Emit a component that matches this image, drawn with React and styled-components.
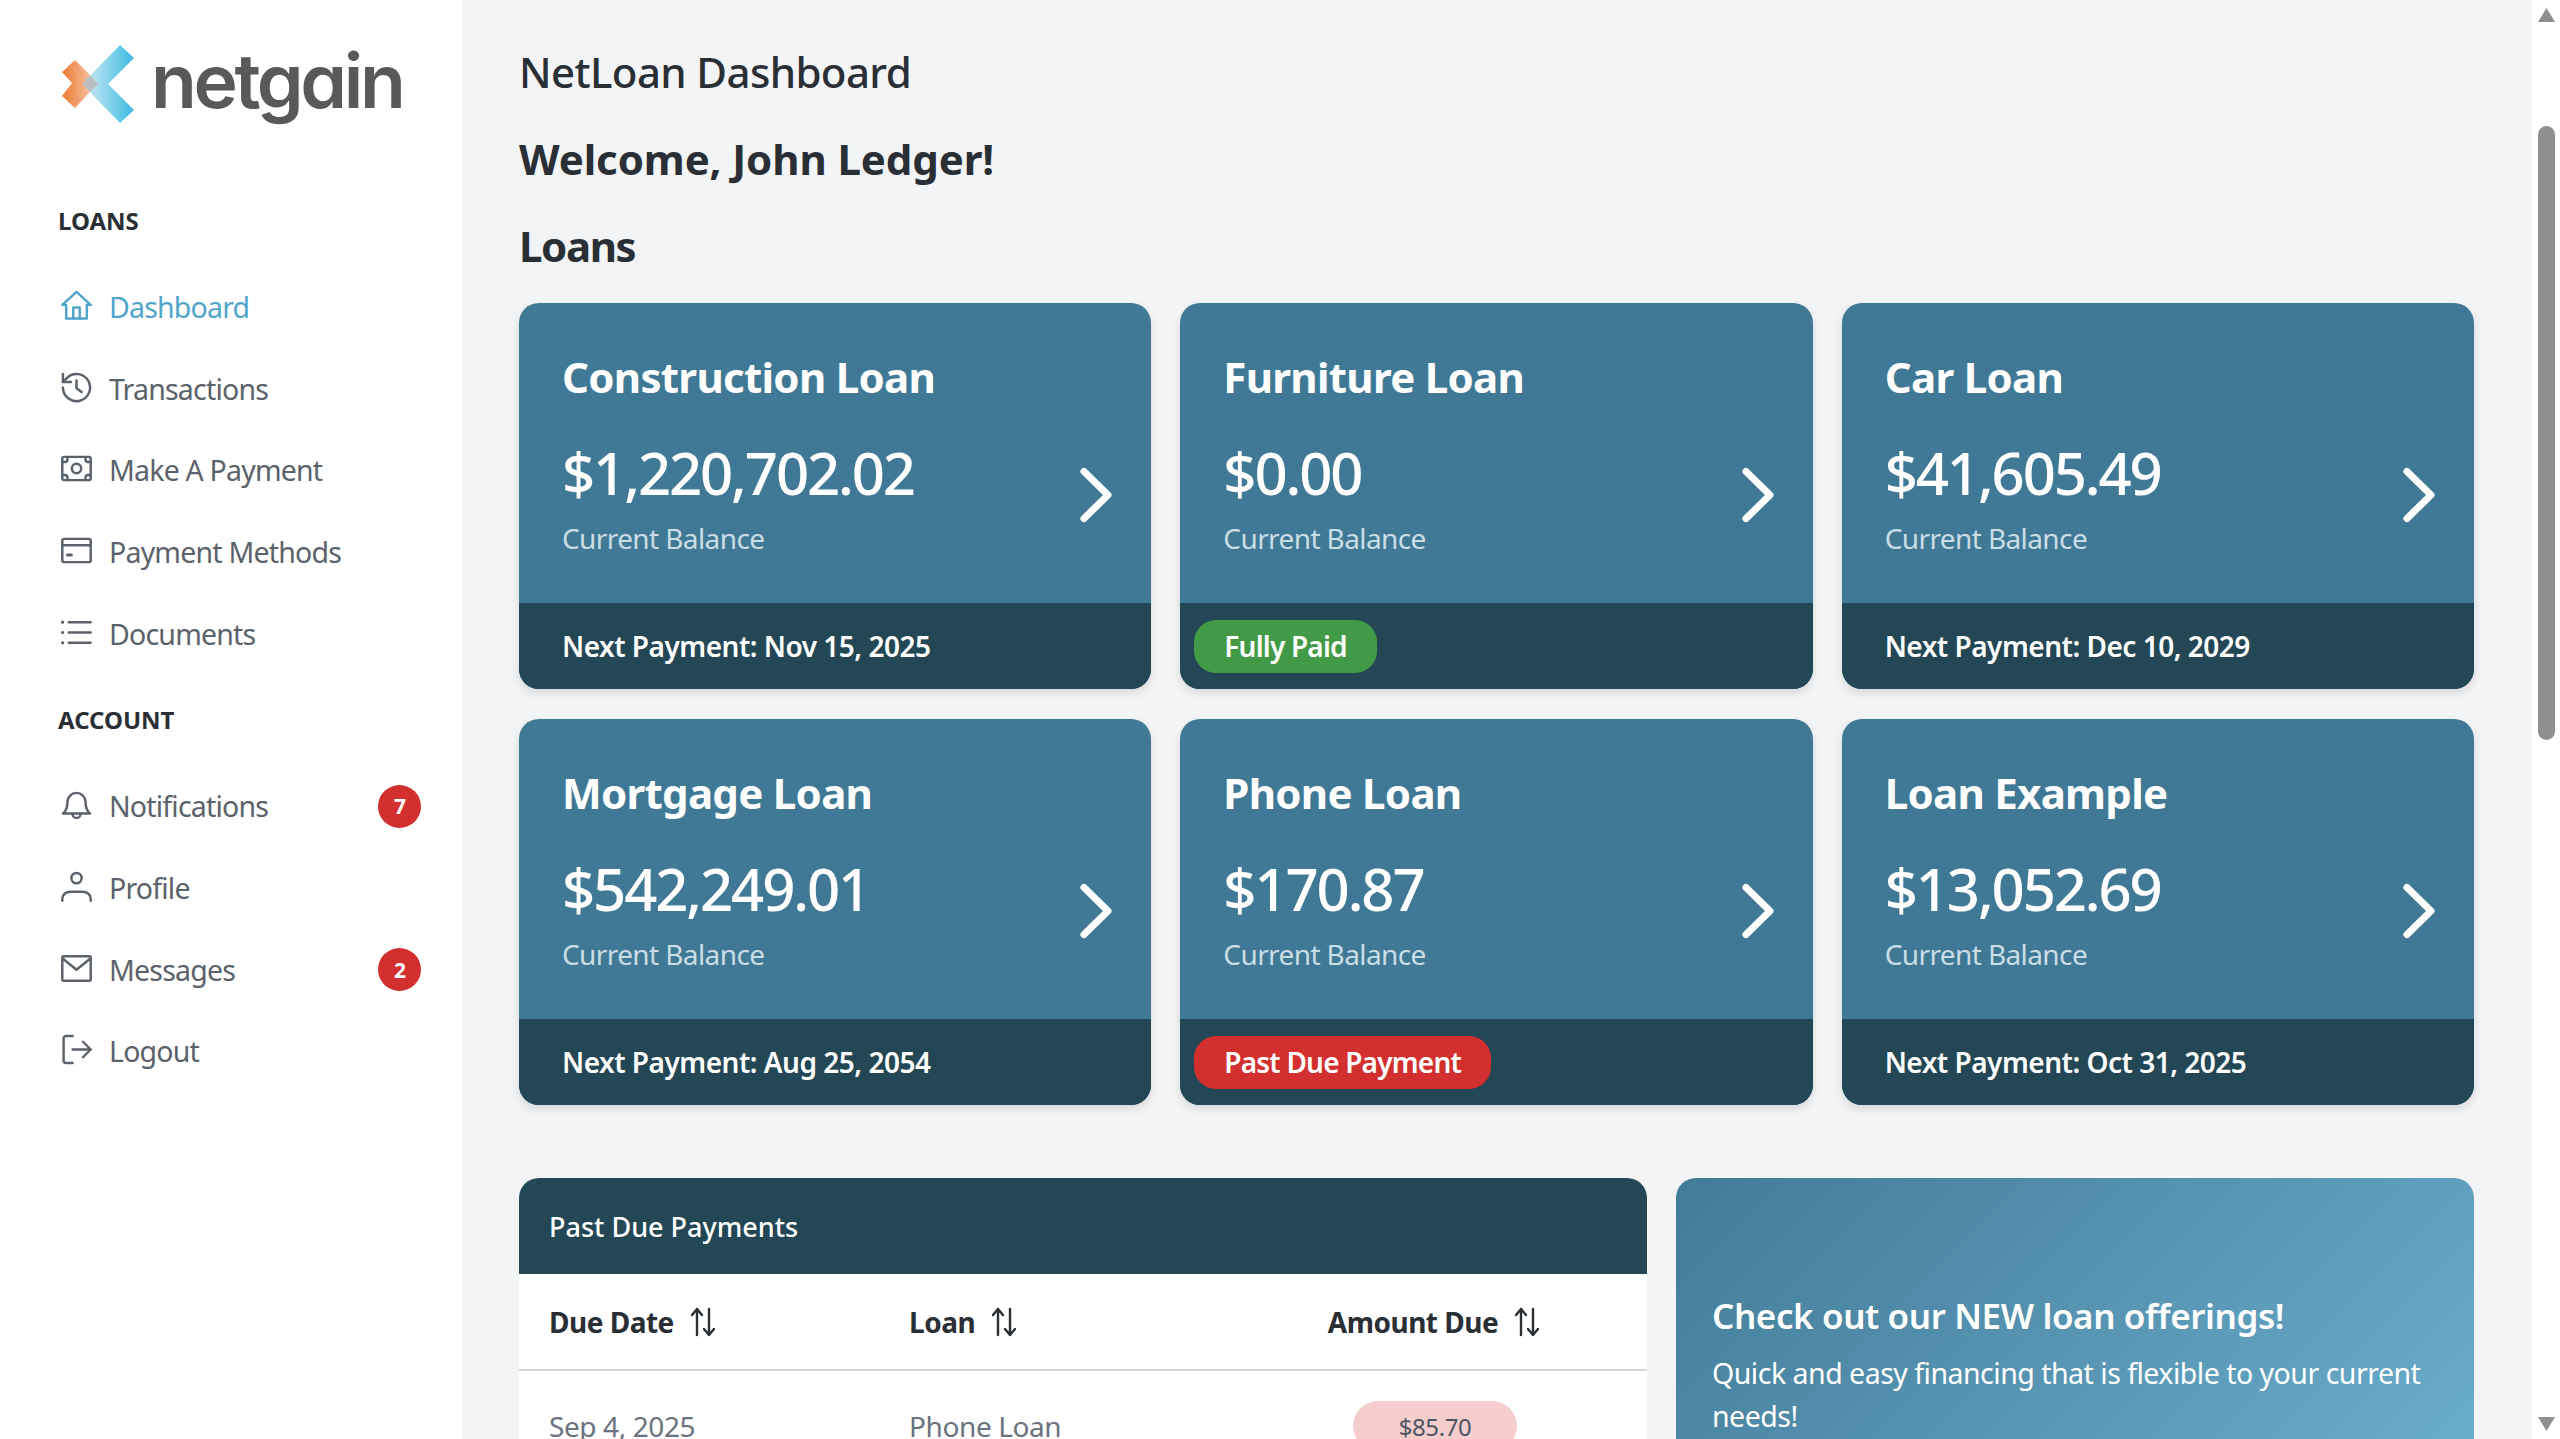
import styled, { createGlobalStyle } from 'styled-components';

const GlobalStyle = createGlobalStyle`
  html, body {
    margin: 0;
    height: 100%;
    overflow: hidden;
    background: #f3f4f6;
    font-family: 'Noto Sans', 'Open Sans', sans-serif;
  }
  * {
    box-sizing: border-box;
  }
`;

const Page = styled.div`
  display: grid;
  grid-template-columns: 462px 1fr 28px;
  height: 100vh;
  overflow: hidden;
`;

/* sidebar */
const Sidebar = styled.aside`
  background: #fff;
  padding: 45px 41px 0 58px;
`;

const LogoRow = styled.div`
  display: flex;
  align-items: flex-start;
  gap: 17px;
  height: 78px;
  padding-left: 4px;
`;

const LogoWord = styled.span`
  font-family: Inter, sans-serif;
  font-feature-settings: 'cv11' 1;
  font-size: 75px;
  font-weight: 600;
  line-height: 72px;
  letter-spacing: -3.4px;
  color: #58595b;
`;

const NavLabel = styled.h4`
  margin: ${(p) => p.$top}px 0 0;
  height: 40px;
  font-size: 24px;
  font-weight: 700;
  line-height: 40px;
  color: #2a2e35;
`;

const NavList = styled.nav`
  display: flex;
  flex-direction: column;
  margin-top: 25px;
`;

const NavItem = styled.a`
  display: flex;
  align-items: center;
  gap: 18px;
  height: 81.7px;
  padding-left: 4px;
  font-size: 28.5px;
  letter-spacing: -0.8px;
  color: ${(p) => (p.$active ? '#52a5ca' : '#5b626a')};
`;

const NavText = styled.span`
  flex: 1;
`;

const Badge = styled.span`
  display: flex;
  align-items: center;
  justify-content: center;
  width: 43px;
  height: 43px;
  border-radius: 50%;
  background: #d32f2f;
  color: #fff;
  font-size: 21px;
  font-weight: 700;
`;

const IconSvg = styled.svg`
  flex: none;
  width: 31px;
  height: 31px;
  margin: -3px -1px 0;
  fill: none;
  stroke: currentColor;
  stroke-width: 1.9;
  stroke-linecap: round;
  stroke-linejoin: round;
`;

/* main column */
const Main = styled.main`
  padding: 28px 58px 0 57px;
  overflow: hidden;
  background: #f3f4f6;
`;

const PageTitle = styled.h1`
  margin: 0;
  font-size: 42px;
  font-weight: 500;
  line-height: 87px;
  letter-spacing: -0.6px;
  color: #2a2e35;
`;

const SectionTitle = styled.h2`
  margin: 0;
  font-size: 42px;
  font-weight: 700;
  line-height: 87px;
  letter-spacing: ${(p) => p.$spacing}px;
  color: #2a2e35;
`;

const CardGrid = styled.div`
  display: grid;
  grid-template-columns: repeat(3, 1fr);
  gap: 30px 29px;
  margin-top: 14px;
`;

const Card = styled.article`
  display: flex;
  flex-direction: column;
  height: 386px;
  border-radius: 20px;
  overflow: hidden;
  background: #407995;
  color: #fff;
  box-shadow: 0 4px 10px rgba(0, 0, 0, 0.12);
`;

const CardBody = styled.div`
  flex: 1;
  display: flex;
  justify-content: space-between;
  padding: 43px 36px 0 43px;
`;

const CardTitle = styled.h3`
  margin: 0;
  font-size: 42px;
  font-weight: 700;
  line-height: 62px;
  letter-spacing: -0.7px;
`;

const Amount = styled.div`
  margin-top: 32px;
  font-size: 58px;
  font-weight: 500;
  line-height: 66px;
  letter-spacing: -2.1px;
`;

const BalanceLabel = styled.div`
  margin-top: 13px;
  font-size: 28px;
  line-height: 38px;
  letter-spacing: -0.6px;
  color: #c9dde7;
`;

const Chevron = styled.svg`
  flex: none;
  align-self: flex-end;
  width: 38px;
  height: 60px;
  margin-bottom: 78px;
  fill: none;
  stroke: #fff;
  stroke-width: 7;
  stroke-linecap: round;
  stroke-linejoin: round;
`;

const CardFooter = styled.div`
  display: flex;
  align-items: center;
  height: 86px;
  padding-left: ${(p) => (p.$pill ? 14 : 43)}px;
  background: #244755;
  font-size: 28px;
  font-weight: 600;
  letter-spacing: -0.5px;
`;

const StatusPill = styled.span`
  display: flex;
  align-items: center;
  height: 53px;
  padding: 0 30px;
  border-radius: 22px;
  background: ${(p) => p.$color};
  font-weight: 600;
  letter-spacing: -0.8px;
`;

const BottomRow = styled.div`
  display: grid;
  grid-template-columns: 1128px 1fr;
  gap: 29px;
  margin-top: 73px;
`;

const TablePanel = styled.section`
  border-radius: 20px 20px 0 0;
  overflow: hidden;
  background: #fff;
  height: 340px;
`;

const TableTitle = styled.div`
  display: flex;
  align-items: center;
  height: 96px;
  padding-left: 30px;
  background: #244755;
  color: #fff;
  font-size: 27px;
  font-weight: 500;
`;

const TableRow = styled.div`
  display: grid;
  grid-template-columns: 360px 344px 1fr;
  align-items: center;
  height: ${(p) => p.$height}px;
  border-bottom: ${(p) => (p.$head ? '2px solid #d5d6d8' : 'none')};
`;

const HeadCell = styled.div`
  display: flex;
  align-items: center;
  justify-content: ${(p) => (p.$center ? 'center' : 'flex-start')};
  gap: 14px;
  padding-left: ${(p) => (p.$center ? 0 : 30)}px;
  font-size: 28px;
  font-weight: 700;
  letter-spacing: -0.5px;
  color: #2a2e35;
`;

const BodyCell = styled.div`
  display: flex;
  justify-content: ${(p) => (p.$center ? 'center' : 'flex-start')};
  padding-left: ${(p) => (p.$center ? 0 : 30)}px;
  font-size: 28px;
  letter-spacing: -0.4px;
  color: #6b7280;
`;

const AmountPill = styled.span`
  display: flex;
  align-items: center;
  justify-content: center;
  width: 164px;
  height: 50px;
  border-radius: 25px;
  background: #f5cdcd;
  color: #4b5563;
  font-size: 24px;
`;

const SortIcon = styled.svg`
  width: 30px;
  height: 30px;
  fill: none;
  stroke: #2a2e35;
  stroke-width: 2.4;
  stroke-linecap: round;
  stroke-linejoin: round;
`;

const Promo = styled.section`
  height: 340px;
  padding: 108px 36px 0;
  border-radius: 20px 20px 0 0;
  background: linear-gradient(135deg, #427b97 0%, #6db0cf 100%);
  color: #fff;
`;

const PromoTitle = styled.h3`
  margin: 0;
  font-size: 35px;
  font-weight: 600;
  line-height: 60px;
  letter-spacing: -0.4px;
`;

const PromoText = styled.p`
  margin: 6px 0 0;
  font-size: 28.5px;
  line-height: 43px;
  letter-spacing: -0.5px;
`;

/* fake browser scrollbar */
const ScrollBar = styled.div`
  display: flex;
  flex-direction: column;
  align-items: center;
  height: 100%;
  background: #fff;
  padding: 8px 0;
`;

const ScrollArrow = styled.svg`
  flex: none;
  width: 17px;
  height: 14px;
  fill: #8f8f8f;
`;

const ScrollThumb = styled.div`
  width: 17px;
  height: 614px;
  margin-top: 104px;
  border-radius: 9px;
  background: #8f8f8f;
`;

const ScrollSpacer = styled.div`
  flex: 1;
`;

const icons = {
  home: (
    <>
      <path d="M1 11.5 12 1.5l11 10h-3V22H4V11.5z" />
      <path d="M9.5 22v-8.5h5V22" />
    </>
  ),
  history: (
    <>
      <path d="M1.5 12a10.5 10.5 0 1 0 3.2-7.5L1.5 7.7" />
      <path d="M1.5 1.5v6.2h6.2" />
      <path d="M12 6.5v6l4 3" />
    </>
  ),
  money: (
    <>
      <rect x="1" y="3" width="22" height="18" rx="1.5" />
      <circle cx="12" cy="12" r="3.6" />
      <path d="M1 7h2a2 2 0 0 0 2-2V3M23 7h-2a2 2 0 0 1-2-2V3M1 17h2a2 2 0 0 1 2 2v2M23 17h-2a2 2 0 0 0-2 2v2" />
    </>
  ),
  card: (
    <>
      <rect x="1" y="3" width="22" height="18" rx="1.5" />
      <path d="M1 8h22" />
      <path d="M5 15.5h3" strokeWidth="2.4" />
    </>
  ),
  list: (
    <>
      <path d="M6 4h17M6 12h17M6 20h17" />
      <path d="M1.2 4h.1M1.2 12h.1M1.2 20h.1" strokeWidth="2.4" />
    </>
  ),
  bell: (
    <>
      <path d="M5 10a7 7 0 0 1 14 0c0 5 1 7 3.5 9h-21C4 17 5 15 5 10z" />
      <path d="M9 19.5a3 3 0 0 0 6 0" />
    </>
  ),
  user: (
    <>
      <circle cx="12" cy="5.5" r="4" />
      <path d="M1 23v-1.5C1 18 4 16 7.5 16h9c3.500 0 6.500 2 6.500 5.500V23" />
    </>
  ),
  mail: (
    <>
      <rect x="1" y="2.500" width="22" height="19" rx="1" />
      <path d="M1.500 4.500 12 13l10.500-8.500" />
    </>
  ),
  logout: (
    <>
      <path d="M9 1.500H4a2 2 0 0 0-2 2v17a2 2 0 0 0 2 2h5" />
      <path d="M9 12h14M17 6l6 6-6 6" />
    </>
  ),
};

function Icon({ name }) {
  return <IconSvg viewBox="0 0 24 24">{icons[name]}</IconSvg>;
}

function Logo() {
  return (
    <LogoRow>
      <svg width="72" height="78" viewBox="0 0 72 78">
        <defs>
          <linearGradient id="logoBlue" x1="20" y1="39" x2="72" y2="39" gradientUnits="userSpaceOnUse">
            <stop offset="0" stopColor="#d3ecf5" />
            <stop offset="1" stopColor="#3dbbe2" />
          </linearGradient>
          <linearGradient id="logoOrange" x1="0" y1="39" x2="34" y2="39" gradientUnits="userSpaceOnUse">
            <stop offset="0" stopColor="#ee7a33" />
            <stop offset="1" stopColor="#f6cdb2" />
          </linearGradient>
        </defs>
        <polygon points="58,0 72,13 46,39 72,65 58,78 20,39" fill="url(#logoBlue)" />
        <polygon points="13,15 0,27 10,38 0,51 13,63 28,47 21,39 28,30" fill="url(#logoOrange)" />
        <polygon points="28,30 36,39 28,47 21,39" fill="#b9bdc0" />
      </svg>
      <LogoWord>netgain</LogoWord>
    </LogoRow>
  );
}

const loansNav = [
  { icon: 'home', label: 'Dashboard', active: true },
  { icon: 'history', label: 'Transactions' },
  { icon: 'money', label: 'Make A Payment' },
  { icon: 'card', label: 'Payment Methods' },
  { icon: 'list', label: 'Documents' },
];

const accountNav = [
  { icon: 'bell', label: 'Notifications', badge: 7 },
  { icon: 'user', label: 'Profile' },
  { icon: 'mail', label: 'Messages', badge: 2 },
  { icon: 'logout', label: 'Logout' },
];

const loans = [
  { title: 'Construction Loan', amount: '$1,220,702.02', next: 'Next Payment: Nov 15, 2025' },
  { title: 'Furniture Loan', amount: '$0.00', pill: 'Fully Paid', pillColor: '#439a46' },
  { title: 'Car Loan', amount: '$41,605.49', next: 'Next Payment: Dec 10, 2029' },
  { title: 'Mortgage Loan', amount: '$542,249.01', next: 'Next Payment: Aug 25, 2054' },
  { title: 'Phone Loan', amount: '$170.87', pill: 'Past Due Payment', pillColor: '#d32f2f' },
  { title: 'Loan Example', amount: '$13,052.69', next: 'Next Payment: Oct 31, 2025' },
];

function NavLinks({ items }) {
  return (
    <NavList>
      {items.map((item) => (
        <NavItem key={item.label} $active={item.active}>
          <Icon name={item.icon} />
          <NavText>{item.label}</NavText>
          {item.badge && <Badge>{item.badge}</Badge>}
        </NavItem>
      ))}
    </NavList>
  );
}

function LoanCard({ loan }) {
  return (
    <Card>
      <CardBody>
        <div>
          <CardTitle>{loan.title}</CardTitle>
          <Amount>{loan.amount}</Amount>
          <BalanceLabel>Current Balance</BalanceLabel>
        </div>
        <Chevron viewBox="0 0 38 60">
          <path d="M7 6.500 31 30 7 53.500" />
        </Chevron>
      </CardBody>
      <CardFooter $pill={!!loan.pill}>
        {loan.pill ? <StatusPill $color={loan.pillColor}>{loan.pill}</StatusPill> : loan.next}
      </CardFooter>
    </Card>
  );
}

function Sort() {
  return (
    <SortIcon viewBox="0 0 30 30">
      <path d="M9 28V2M4 8l5-6 5 6" />
      <path d="M21 2v26M16 22l5 6 5-6" />
    </SortIcon>
  );
}

export default function App() {
  return (
    <Page>
      <GlobalStyle />
      <Sidebar>
        <Logo />
        <NavLabel $top={78}>LOANS</NavLabel>
        <NavLinks items={loansNav} />
        <NavLabel $top={26}>ACCOUNT</NavLabel>
        <NavLinks items={accountNav} />
      </Sidebar>
      <Main>
        <PageTitle>NetLoan Dashboard</PageTitle>
        <SectionTitle $spacing={-0.1}>Welcome, John Ledger!</SectionTitle>
        <SectionTitle $spacing={-1.4}>Loans</SectionTitle>
        <CardGrid>
          {loans.map((loan) => (
            <LoanCard key={loan.title} loan={loan} />
          ))}
        </CardGrid>
        <BottomRow>
          <TablePanel>
            <TableTitle>Past Due Payments</TableTitle>
            <TableRow $head $height={97}>
              <HeadCell>Due Date <Sort /></HeadCell>
              <HeadCell>Loan <Sort /></HeadCell>
              <HeadCell $center>Amount Due <Sort /></HeadCell>
            </TableRow>
            <TableRow $height={110}>
              <BodyCell>Sep 4, 2025</BodyCell>
              <BodyCell>Phone Loan</BodyCell>
              <BodyCell $center>
                <AmountPill>$85.70</AmountPill>
              </BodyCell>
            </TableRow>
          </TablePanel>
          <Promo>
            <PromoTitle>Check out our NEW loan offerings!</PromoTitle>
            <PromoText>Quick and easy financing that is flexible to your current needs!</PromoText>
          </Promo>
        </BottomRow>
      </Main>
      <ScrollBar>
        <ScrollArrow viewBox="0 0 17 14">
          <path d="M8.500 0 17 14H0z" />
        </ScrollArrow>
        <ScrollThumb />
        <ScrollSpacer />
        <ScrollArrow viewBox="0 0 17 14">
          <path d="M0 0h17L8.500 14z" />
        </ScrollArrow>
      </ScrollBar>
    </Page>
  );
}
